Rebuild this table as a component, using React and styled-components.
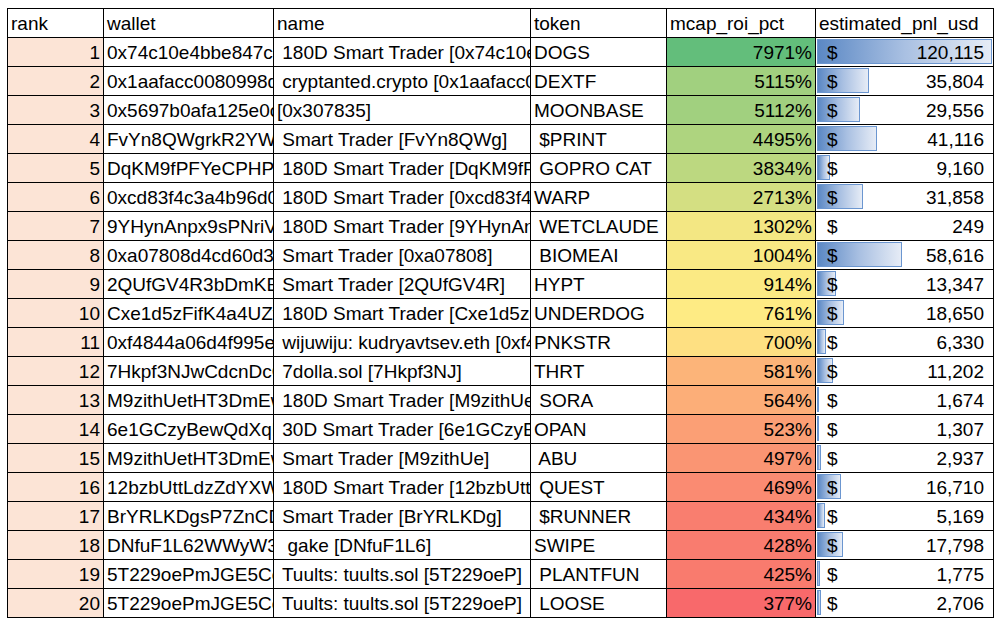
import styled, { createGlobalStyle } from "styled-components"

const GlobalStyle = createGlobalStyle`
    body {
        margin: 0;
        background: #ffffff;
        font-family: "Liberation Sans", Arial, sans-serif;
        color: #000000;
    }
`

const rows = [
    [1, "0x74c10e4bbe847c2a91", " 180D Smart Trader [0x74c10e4b]", "DOGS", 7971, 120115],
    [2, "0x1aafacc0080998d3e7", " cryptanted.crypto [0x1aafacc0]", "DEXTF", 5115, 35804],
    [3, "0x5697b0afa125e0c4b2", "[0x307835]", "MOONBASE", 5112, 29556],
    [4, "FvYn8QWgrkR2YWJq8a", " Smart Trader [FvYn8QWg]", " $PRINT", 4495, 41116],
    [5, "DqKM9fPFYeCPHPq2wX", " 180D Smart Trader [DqKM9fPF]", " GOPRO CAT", 3834, 9160],
    [6, "0xcd83f4c3a4b96d0e17", " 180D Smart Trader [0xcd83f4c3]", "WARP", 2713, 31858],
    [7, "9YHynAnpx9sPNriVmK3", " 180D Smart Trader [9YHynAnp]", " WETCLAUDE", 1302, 249],
    [8, "0xa07808d4cd60d31f8b", " Smart Trader [0xa07808]", " BIOMEAI", 1004, 58616],
    [9, "2QUfGV4R3bDmKEp7Ls", " Smart Trader [2QUfGV4R]", "HYPT", 914, 13347],
    [10, "Cxe1d5zFifK4a4UZt9", " 180D Smart Trader [Cxe1d5zF]", "UNDERDOG", 761, 18650],
    [11, "0xf4844a06d4f995e2c0", " wijuwiju: kudryavtsev.eth [0xf4844a]", "PNKSTR", 700, 6330],
    [12, "7Hkpf3NJwCdcnDcQ8r", " 7dolla.sol [7Hkpf3NJ]", "THRT", 581, 11202],
    [13, "M9zithUetHT3DmEw5n", " 180D Smart Trader [M9zithUe]", " SORA", 564, 1674],
    [14, "6e1GCzyBewQdXqN4hP", " 30D Smart Trader [6e1GCzyB]", "OPAN", 523, 1307],
    [15, "M9zithUetHT3DmEw5n", " Smart Trader [M9zithUe]", " ABU", 497, 2937],
    [16, "12bzbUttLdzZdYXWr6", " 180D Smart Trader [12bzbUtt]", " QUEST", 469, 16710],
    [17, "BrYRLKDgsP7ZnCDy2v", " Smart Trader [BrYRLKDg]", " $RUNNER", 434, 5169],
    [18, "DNfuF1L62WWyW3kT8e", "  gake [DNfuF1L6]", "SWIPE", 428, 17798],
    [19, "5T229oePmJGE5CeX4d", " Tuults: tuults.sol [5T229oeP]", " PLANTFUN", 425, 1775],
    [20, "5T229oePmJGE5CeX4d", " Tuults: tuults.sol [5T229oeP]", " LOOSE", 377, 2706],
]

const headers = ["rank", "wallet", "name", "token", "mcap_roi_pct", "estimated_pnl_usd"]

// 3-colour scale, midpoint at the 50th percentile (like Excel)
const rois = rows.map((r) => r[4]).sort((a, b) => a - b)
const roiMin = rois[0]
const roiMax = rois[rois.length - 1]
const roiMid = (rois[9] + rois[10]) / 2
const RED = [248, 105, 107]
const YELLOW = [255, 235, 132]
const GREEN = [99, 190, 123]

const mix = (a, b, t) => a.map((v, i) => Math.round(v + (b[i] - v) * t))

const roiColor = (v) => {
    const c = v >= roiMid
        ? mix(YELLOW, GREEN, (v - roiMid) / (roiMax - roiMid))
        : mix(YELLOW, RED, (roiMid - v) / (roiMid - roiMin))
    return `rgb(${c[0]}, ${c[1]}, ${c[2]})`
}

const pnlMax = Math.max(...rows.map((r) => r[5]))
const BAR_SPACE = 175

const Page = styled.div`
    padding: 8px 0 0 7px;
`

const Sheet = styled.div`
    display: grid;
    grid-template-columns: 95px 169px 256px 135px 148px 177px;
    grid-auto-rows: 28px;
    gap: 1px;
    padding: 1px;
    width: max-content;
    background: #000000;
`

const Row = styled.div`
    display: contents;
`

const Cell = styled.div`
    position: relative;
    display: flex;
    align-items: flex-end;
    justify-content: ${(p) => (p.$right ? "flex-end" : "flex-start")};
    padding: 0 3px 2px;
    background: ${(p) => p.$bg || "#ffffff"};
    font-size: 19px;
    line-height: 22px;
    white-space: pre;
    overflow: hidden;
`

const PnlCell = styled(Cell)`
    justify-content: space-between;
    padding: 0 9px 2px 11px;
`

const DataBar = styled.div`
    position: absolute;
    left: 1px;
    top: 1px;
    height: 25px;
    box-sizing: border-box;
    border: 1px solid #6b96d0;
    background: linear-gradient(to right, #5b88c4 0%, #a9c0e2 50%, #e6ecf6 100%);
`

const CellText = styled.span`
    position: relative;
`

const fmt = (n) => n.toLocaleString("en-US")

const App = () => {
    return (
        <Page>
            <GlobalStyle />
            <Sheet>
                <Row>
                    {headers.map((h) => (
                        <Cell key={h}>{h}</Cell>
                    ))}
                </Row>
                {rows.map(([rank, wallet, name, token, roi, pnl]) => {
                    const barWidth = (pnl / pnlMax) * BAR_SPACE
                    return (
                        <Row key={rank}>
                            <Cell $right $bg="#fce4d6">{rank}</Cell>
                            <Cell>{wallet}</Cell>
                            <Cell>{name}</Cell>
                            <Cell>{token}</Cell>
                            <Cell $right $bg={roiColor(roi)}>{roi}%</Cell>
                            <PnlCell>
                                {barWidth >= 1 && <DataBar style={{ width: barWidth }} />}
                                <CellText>$</CellText>
                                <CellText>{fmt(pnl)}</CellText>
                            </PnlCell>
                        </Row>
                    )
                })}
            </Sheet>
        </Page>
    )
}

export default App
